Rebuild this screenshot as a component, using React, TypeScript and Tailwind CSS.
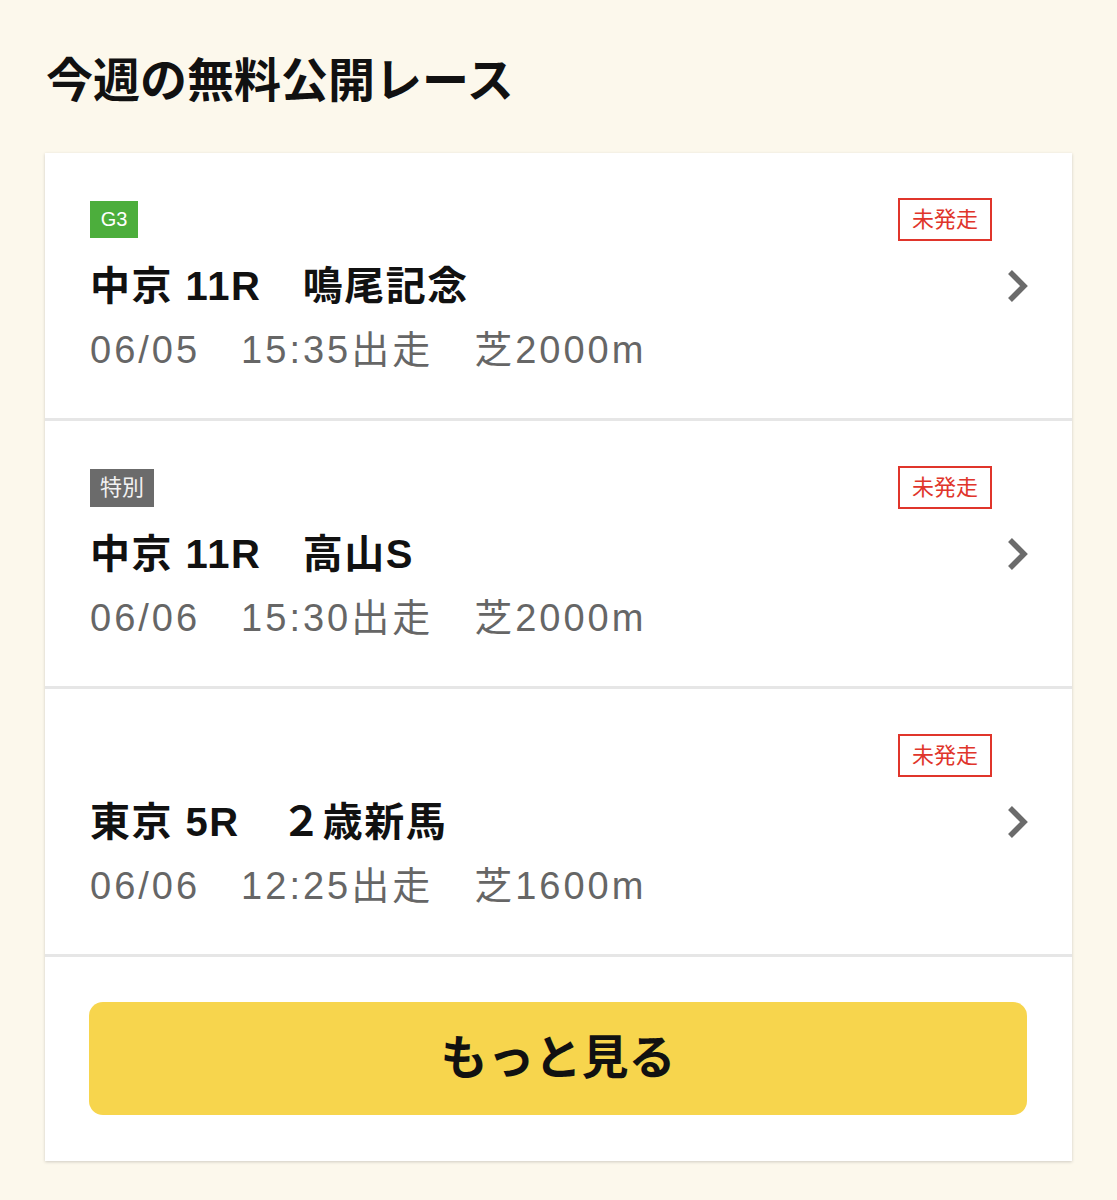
import React from 'react';

interface Race {
  grade?: { label: string; kind: 'g3' | 'special' };
  title: string;
  date: string;
  time: string;
  course: string;
}

const races: Race[] = [
  {
    grade: { label: 'G3', kind: 'g3' },
    title: '中京 11R　鳴尾記念',
    date: '06/05',
    time: '15:35出走',
    course: '芝2000m',
  },
  {
    grade: { label: '特別', kind: 'special' },
    title: '中京 11R　高山S',
    date: '06/06',
    time: '15:30出走',
    course: '芝2000m',
  },
  {
    title: '東京 5R　２歳新馬',
    date: '06/06',
    time: '12:25出走',
    course: '芝1600m',
  },
];

function Chevron() {
  return (
    <svg width="24" height="36" viewBox="0 0 24 36" className="shrink-0">
      <polyline points="5,4 19,18 5,32" fill="none" stroke="#6b6b6b" strokeWidth="5.5" />
    </svg>
  );
}

function GradeBadge({ grade }: { grade: Race['grade'] }) {
  if (!grade) return <span />;
  if (grade.kind === 'g3') {
    return (
      <span className="h-[37px] w-[48px] bg-[#4cae3c] text-center text-[20px] leading-[37px] text-white">
        {grade.label}
      </span>
    );
  }
  return (
    <span className="h-[38px] px-[10px] bg-[#6b6b6b] text-[22px] leading-[38px] text-[#f2f2f2]">
      {grade.label}
    </span>
  );
}

function RaceRow({ race }: { race: Race }) {
  return (
    <div className="flex items-center border-b-[3px] border-[#e6e6e6] pl-[45px] pr-[43px] pt-[45px] pb-[45px]">
      <div className="flex-1">
        {/* badges */}
        <div className="flex h-[43px] items-center justify-between">
          <GradeBadge grade={race.grade} />
          <span className="border-2 border-[#e0352b] px-[12px] text-[22px] leading-[39px] text-[#e0352b]">
            未発走
          </span>
        </div>
        <p className="mt-[21px] text-[40px] font-bold leading-[48px] tracking-[1.5px] text-[#111]">{race.title}</p>
        <p className="mt-[17px] text-[38px] leading-[46px] tracking-[3px] text-[#666]">
          {race.date}　{race.time}　{race.course}
        </p>
      </div>
      <div className="ml-[13px]">
        <Chevron />
      </div>
    </div>
  );
}

export default function App() {
  return (
    <div
      className="min-h-[1200px] bg-[#fcf8ec] px-[45px] pt-[53px] pb-[40px]"
      style={{ fontFamily: '"Liberation Sans", "Noto Sans CJK JP", sans-serif' }}
    >
      <h1 className="h-[56px] pl-px text-[47px] font-bold leading-[56px] text-[#111]">今週の無料公開レース</h1>

      <div className="mt-[44px] bg-white shadow-[0_1px_3px_rgba(0,0,0,0.18)]">
        {races.map((race, i) => (
          <RaceRow key={i} race={race} />
        ))}

        {/* More button */}
        <div className="pl-[44px] pr-[45px] pt-[45px] pb-[46px]">
          <button className="h-[113px] w-full rounded-[14px] bg-[#f7d54d] text-[47px] font-bold text-[#111]">
            もっと見る
          </button>
        </div>
      </div>
    </div>
  );
}
